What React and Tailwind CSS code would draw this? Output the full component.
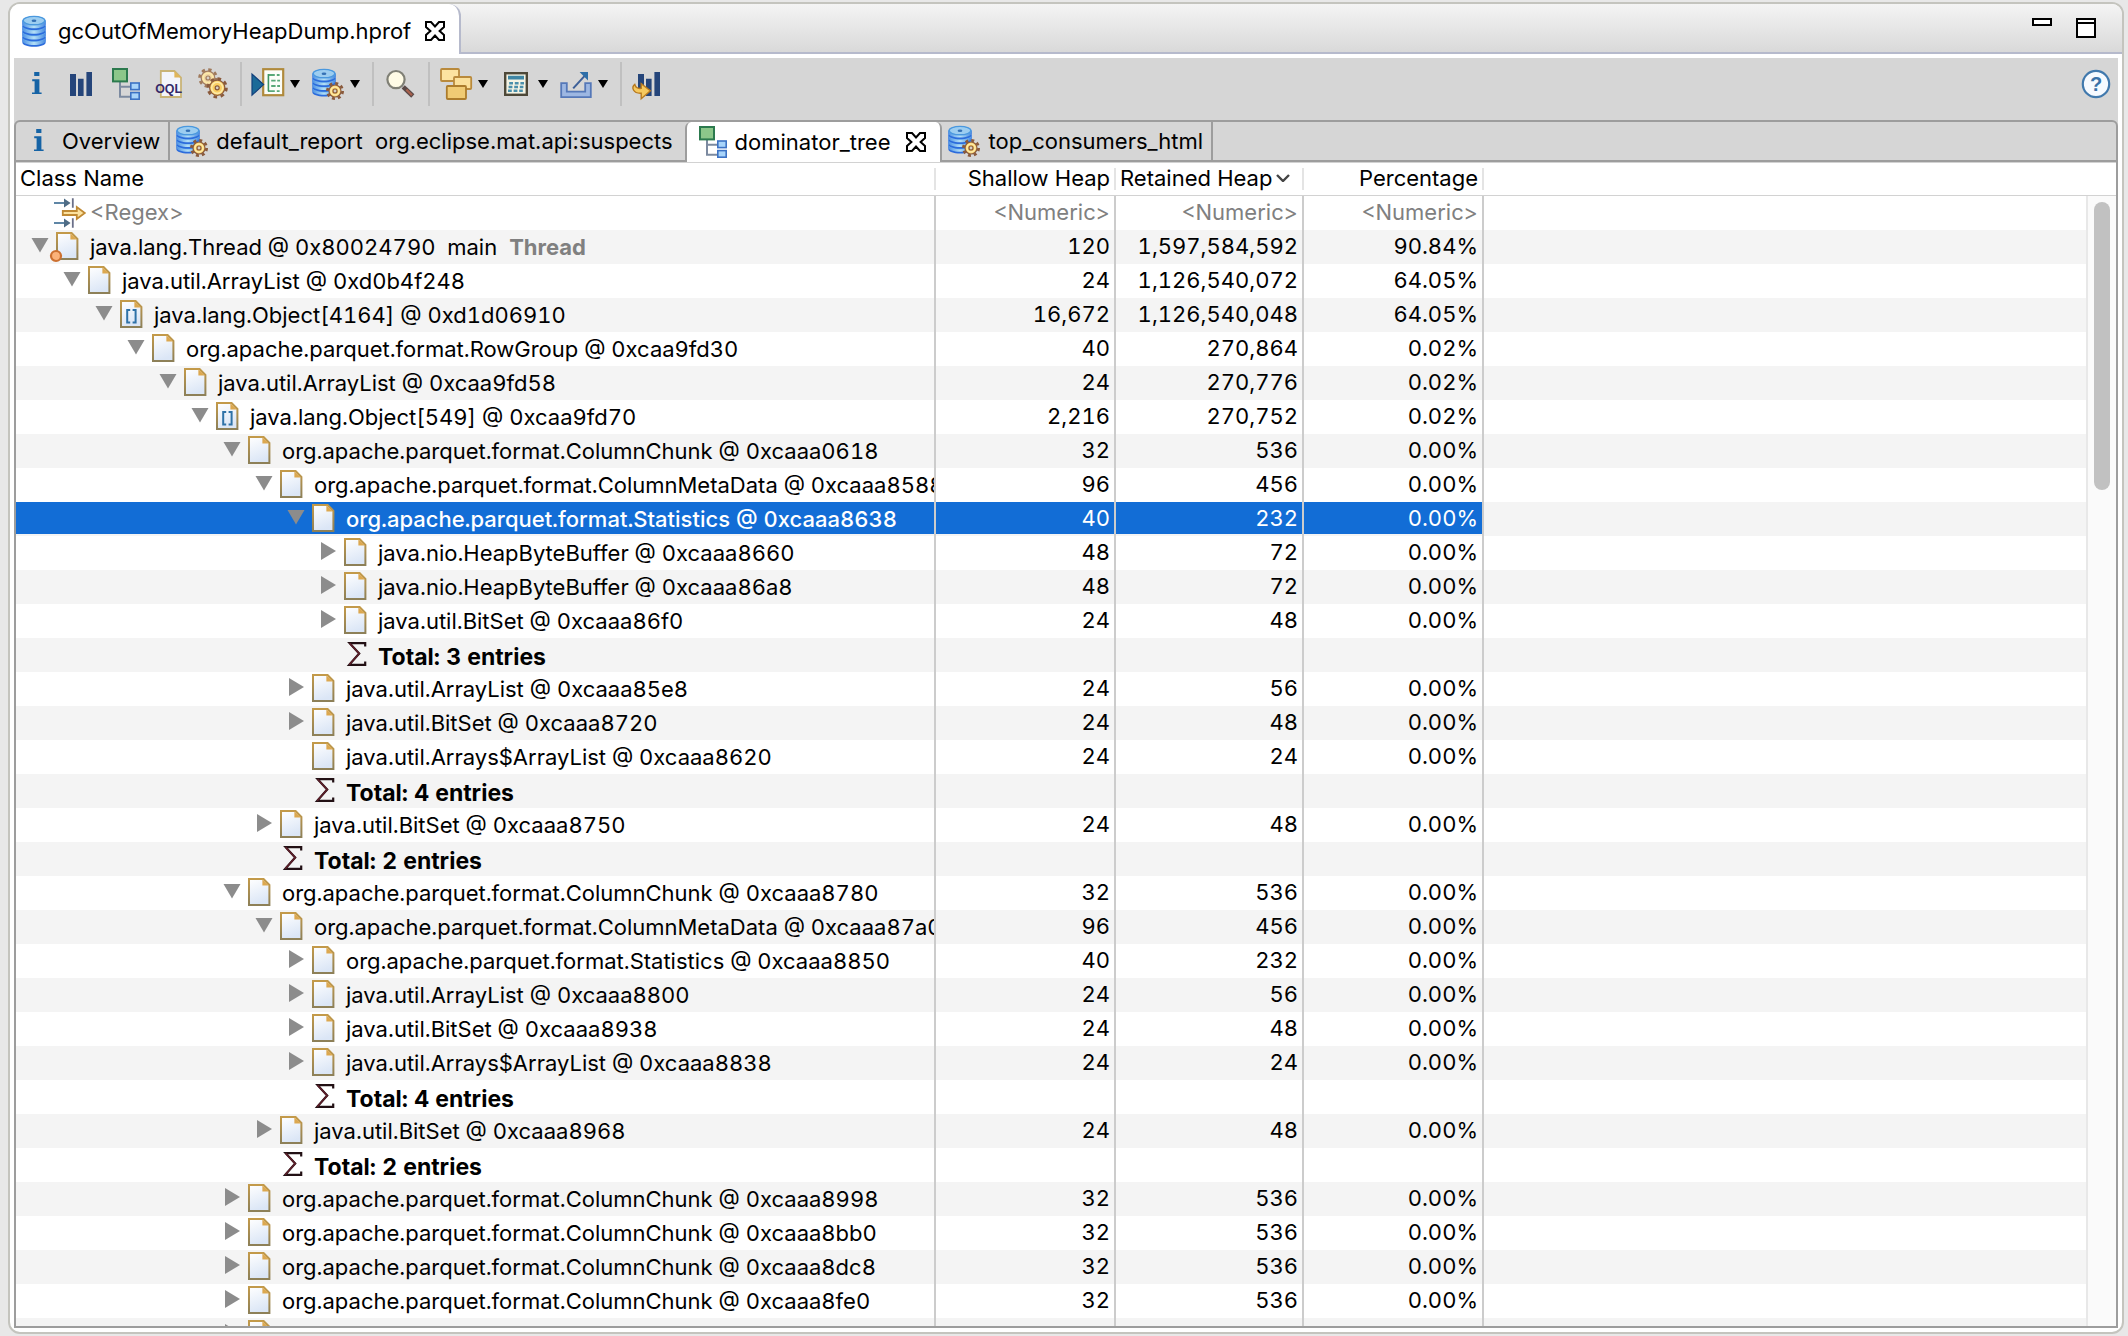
import React from "react";

function Icon({ children, className = "" }) {
  return (
    <svg viewBox="0 0 16 16" aria-hidden="true" className={"block size-8 shrink-0 overflow-visible " + className}>
      {children}
    </svg>
  );
}

function Gear({ cx, cy, r, faded }) {
  const c = faded ? "#a07a5c" : "#8a5a3c";
  const tooth = (r * Math.PI) / 8;
  return (
    <g>
      <circle cx={cx} cy={cy} r={r} fill="none" stroke={c} strokeWidth="1.4" strokeDasharray={`${tooth} ${tooth}`} />
      <circle cx={cx} cy={cy} r={r - 0.8} fill={faded ? "#f0d6a4" : "#fbcf62"} stroke={c} strokeWidth="0.6" />
      <circle cx={cx} cy={cy} r={r - 1.8} fill="none" stroke="#fdeaa8" strokeWidth="0.8" />
      <circle cx={cx} cy={cy} r="1" fill="#d8d0c4" stroke={c} strokeWidth="0.6" />
    </g>
  );
}

function Discs({ step, bottom }) {
  const levels = [3, 2, 1, 0].map((n) => 2.8 + n * step);
  return (
    <g>
      {levels.map((y) => (
        <g key={y}>
          <path d={`M2.2 ${y}v${bottom}c0 1.1 2.6 2 5.8 2s5.8-.9 5.8-2v-${bottom}z`} fill="#2c6cdc" />
          <path d={`M2.2 ${y}v${bottom - 0.9}c0 1.1 2.6 2 5.8 2s5.8-.9 5.8-2V${y}z`} fill="url(#disc)" />
          <ellipse cx="8" cy={y} rx="5.8" ry="2.2" fill="#6cb2ec" />
        </g>
      ))}
      <ellipse cx="8" cy="2.8" rx="5.4" ry="2.1" fill="#9ccdf0" stroke="#4a98de" strokeWidth="0.7" />
      <ellipse cx="8" cy="2.9" rx="1.2" ry="0.6" fill="#3470b4" />
    </g>
  );
}

const DatabaseIcon = () => (
  <Icon>
    <Discs step={2.8} bottom={2.7} />
  </Icon>
);

const DatabaseGearIcon = () => (
  <Icon>
    <g transform="translate(-2 0)">
      <Discs step={2.4} bottom={2.3} />
    </g>
    <Gear cx={11.5} cy={11.5} r={3.8} />
  </Icon>
);

const InfoIcon = () => (
  <Icon>
    <path d="M7.1 2h2.6v2H7.1zM6.1 5.6h3.6v6.6h1.1V13H6v-.8h1.3V6.6H6.1z" fill="#1563a5" />
  </Icon>
);

const BarsIcon = () => (
  <Icon>
    <path d="M3 3h3v11H3zM7 5.4h2.8V14H7zM11.2 2H14v12h-2.8z" fill="#25457a" />
  </Icon>
);

const TreeIcon = () => (
  <Icon>
    <path d="M6 7v7.4h5.5M6 9.4h5.5" fill="none" stroke="#7c8aa0" />
    <rect x="2.5" y="0.5" width="7" height="6.2" fill="#8cc78a" stroke="#2c7a4e" />
    <rect x="11.4" y="7.5" width="4.2" height="3.3" fill="#a8d4fa" stroke="#3c72c4" strokeWidth="0.8" />
    <rect x="11.4" y="12.3" width="4.2" height="3.3" fill="#a8d4fa" stroke="#3c72c4" strokeWidth="0.8" />
  </Icon>
);

const OqlIcon = () => (
  <Icon>
    <path d="M4.4 1.5h6.8l3.3 3.3v9.7H4.4z" fill="#f3f5fb" stroke="#c9b477" strokeWidth="0.9" />
    <path d="M11.2 1.5v3.3h3.3z" fill="#e0b65c" />
    <text x="1.6" y="12.3" fontSize="6.2" fontWeight="bold" fontFamily="Liberation Sans, sans-serif" fill="#352a68">OQL</text>
  </Icon>
);

const GearsIcon = () => (
  <Icon>
    <Gear cx={6} cy={5} r={4.2} faded />
    <Gear cx={10.6} cy={9.9} r={4.6} />
  </Icon>
);

const QueryIcon = () => (
  <Icon>
    <rect x="5.6" y="0.6" width="10" height="13" fill="#fbfdf8" stroke="#b08a3c" strokeWidth="1.1" />
    <path d="M8 3.5h3.4M12.4 3.5h1.4M9.6 6.3h2.2M12.6 6.3h1.4M9.6 9h2.2M12.6 9h1.4M8 11.6h3.4M12.4 11.6h1.4" stroke="#58a878" strokeWidth="0.9" />
    <path d="M8.2 3v8.6" stroke="#3f9464" strokeWidth="0.8" />
    <path d="M0 3v10.6l5.8-5.3z" fill="#1b6a98" stroke="#12407c" strokeWidth="0.6" />
  </Icon>
);

const SearchIcon = () => (
  <Icon>
    <path d="M9.6 9.4l4.8 4.6" stroke="#5a4a48" strokeWidth="2.3" />
    <path d="M11.2 10.8l2.8 2.8" stroke="#a8604c" strokeWidth="1.1" />
    <circle cx="6" cy="5.8" r="4.3" fill="#fffbe6" stroke="#808076" strokeWidth="1.1" />
  </Icon>
);

const GroupIcon = () => (
  <Icon>
    <rect x="0.5" y="0.5" width="9" height="6" rx="0.5" fill="#fce3a0" stroke="#b98a3c" strokeWidth="0.9" />
    <rect x="7" y="4.5" width="8.6" height="6" rx="0.5" fill="#fbe09a" stroke="#b98a3c" strokeWidth="0.9" />
    <rect x="3.4" y="9" width="9.6" height="6.5" rx="0.5" fill="#f0cb74" stroke="#ac7c2c" strokeWidth="0.9" />
  </Icon>
);

const CalculatorIcon = () => (
  <Icon>
    <rect x="2.6" y="2.6" width="10.8" height="10.8" fill="#f4f4e4" stroke="#4d4838" strokeWidth="1.2" />
    <path d="M4 4.8h8" stroke="#3f86a4" strokeWidth="1.8" />
    <path d="M4.6 7.6h7.4M4.3 9.5h7.4M4 11.4h7.4" stroke="#4a90ac" strokeWidth="1.3" strokeDasharray="1.9 0.9" />
  </Icon>
);

const ExportIcon = () => (
  <Icon>
    <path d="M.6 7.6h2.8v4.2h9.2V7.6h2.8v7H.6z" fill="#9db7e2" stroke="#5578b8" strokeWidth="0.9" />
    <path d="M6.6 10.2l6.4-7" stroke="#3c5f98" strokeWidth="1" />
    <path d="M9.8 2h4.2v4.2z" fill="#2d6ea8" />
  </Icon>
);

const CompareIcon = () => (
  <Icon>
    <path d="M3 3h3v9H3zM7 5.4h2.8V14H7zM11.2 2H14v12h-2.8z" fill="#25457a" />
    <path d="M1.4 8.2C-.4 9.6.4 12.8 4.6 12.6v2.8l4.6-4-4.6-3.6v2.4C3 10.4 1.8 9.8 1.4 8.2z" fill="#f6c95e" stroke="#b87a1e" strokeWidth="0.7" />
  </Icon>
);

const RegexIcon = () => (
  <Icon>
    <path d="M0 3h6M0 13h6" stroke="#5f86a6" strokeWidth="1" />
    <path d="M5 .8L8.3 3 5 5.2zM5 10.8L8.3 13 5 15.2z" fill="#4f6c86" />
    <path d="M9.4.6v4.8M9.4 10.6v4.8" stroke="#6a6f88" strokeWidth="0.9" />
    <path d="M4.4 7h7V5l4 3-4 3V9h-7z" fill="#fbe2a0" stroke="#c08a34" strokeWidth="0.9" />
  </Icon>
);

const HelpIcon = () => (
  <Icon>
    <circle cx="8" cy="8" r="6.6" fill="#f6faff" stroke="#4179ad" strokeWidth="1.1" />
    <text x="8" y="11.6" textAnchor="middle" fontSize="10" fontWeight="bold" fontFamily="Liberation Sans, sans-serif" fill="#3a72a8">?</text>
  </Icon>
);

function ObjectIcon({ kind }) {
  if (kind === "sum")
    return (
      <Icon>
        <path d="M12.6 4.2V2.6H4.8l4.8 5.2-5 5.6h8v-1.6" fill="none" stroke="#221014" strokeWidth="1.1" />
        <path d="M4.8 2.6l4.8 5.2-5 5.6" fill="none" stroke="#5e1f2a" strokeWidth="0.8" />
      </Icon>
    );
  return (
    <Icon>
      <path d="M2.5 1.5h7.3l2.9 2.9v10.1H2.5z" fill="url(#page)" stroke="url(#pageEdge)" />
      <path d="M9.2 1.6v3.2h3.4z" fill="#dca850" />
      {kind === "array" && <path d="M7.1 6H5.6v6.2h1.5M8.3 6h1.5v6.2H8.3" fill="none" stroke="#2f72a8" />}
      {kind === "thread" && <circle cx="2" cy="13" r="2.5" fill="#fbb27a" stroke="#cc7030" strokeWidth="1.1" />}
    </Icon>
  );
}

const CloseIcon = () => (
  <svg viewBox="0 0 10 10" className="block size-5">
    <path d="M.5.5H3l2 2.2L7 .5h2.5V3L7.3 5l2.2 2v2.5H7L5 7.3 3 9.5H.5V7l2.2-2L.5 3z" fill="#fff" stroke="#000" />
  </svg>
);

const tools = [
  { label: "Overview", icon: InfoIcon },
  { label: "Histogram", icon: BarsIcon },
  { label: "Dominator tree", icon: TreeIcon },
  { label: "OQL", icon: OqlIcon },
  { label: "Thread overview", icon: GearsIcon },
  null,
  { label: "Run expert system test", icon: QueryIcon, menu: true },
  { label: "Query browser", icon: DatabaseGearIcon, menu: true },
  null,
  { label: "Find object", icon: SearchIcon },
  null,
  { label: "Group result", icon: GroupIcon, menu: true },
  { label: "Calculate retained size", icon: CalculatorIcon, menu: true },
  { label: "Export", icon: ExportIcon, menu: true },
  null,
  { label: "Compare", icon: CompareIcon },
];

const CHUNK = "org.apache.parquet.format.ColumnChunk @ ";
const META = "org.apache.parquet.format.ColumnMetaData @ ";
const STATS = "org.apache.parquet.format.Statistics @ ";

// level, state (open / closed / leaf), name, shallow heap, retained heap, percentage, icon kind
const rows = [
  [0, "open", "java.lang.Thread @ 0x80024790  main", "120", "1,597,584,592", "90.84%", "thread"],
  [1, "open", "java.util.ArrayList @ 0xd0b4f248", "24", "1,126,540,072", "64.05%"],
  [2, "open", "java.lang.Object[4164] @ 0xd1d06910", "16,672", "1,126,540,048", "64.05%", "array"],
  [3, "open", "org.apache.parquet.format.RowGroup @ 0xcaa9fd30", "40", "270,864", "0.02%"],
  [4, "open", "java.util.ArrayList @ 0xcaa9fd58", "24", "270,776", "0.02%"],
  [5, "open", "java.lang.Object[549] @ 0xcaa9fd70", "2,216", "270,752", "0.02%", "array"],
  [6, "open", CHUNK + "0xcaaa0618", "32", "536", "0.00%"],
  [7, "open", META + "0xcaaa8588", "96", "456", "0.00%"],
  [8, "open", STATS + "0xcaaa8638", "40", "232", "0.00%", "selected"],
  [9, "closed", "java.nio.HeapByteBuffer @ 0xcaaa8660", "48", "72", "0.00%"],
  [9, "closed", "java.nio.HeapByteBuffer @ 0xcaaa86a8", "48", "72", "0.00%"],
  [9, "closed", "java.util.BitSet @ 0xcaaa86f0", "24", "48", "0.00%"],
  [9, "leaf", "Total: 3 entries", "", "", "", "sum"],
  [8, "closed", "java.util.ArrayList @ 0xcaaa85e8", "24", "56", "0.00%"],
  [8, "closed", "java.util.BitSet @ 0xcaaa8720", "24", "48", "0.00%"],
  [8, "leaf", "java.util.Arrays$ArrayList @ 0xcaaa8620", "24", "24", "0.00%"],
  [8, "leaf", "Total: 4 entries", "", "", "", "sum"],
  [7, "closed", "java.util.BitSet @ 0xcaaa8750", "24", "48", "0.00%"],
  [7, "leaf", "Total: 2 entries", "", "", "", "sum"],
  [6, "open", CHUNK + "0xcaaa8780", "32", "536", "0.00%"],
  [7, "open", META + "0xcaaa87a0", "96", "456", "0.00%"],
  [8, "closed", STATS + "0xcaaa8850", "40", "232", "0.00%"],
  [8, "closed", "java.util.ArrayList @ 0xcaaa8800", "24", "56", "0.00%"],
  [8, "closed", "java.util.BitSet @ 0xcaaa8938", "24", "48", "0.00%"],
  [8, "closed", "java.util.Arrays$ArrayList @ 0xcaaa8838", "24", "24", "0.00%"],
  [8, "leaf", "Total: 4 entries", "", "", "", "sum"],
  [7, "closed", "java.util.BitSet @ 0xcaaa8968", "24", "48", "0.00%"],
  [7, "leaf", "Total: 2 entries", "", "", "", "sum"],
  [6, "closed", CHUNK + "0xcaaa8998", "32", "536", "0.00%"],
  [6, "closed", CHUNK + "0xcaaa8bb0", "32", "536", "0.00%"],
  [6, "closed", CHUNK + "0xcaaa8dc8", "32", "536", "0.00%"],
  [6, "closed", CHUNK + "0xcaaa8fe0", "32", "536", "0.00%"],
  [6, "closed", "", "32", "536", "0.00%"],
];

function Twisty({ state }) {
  if (state === "leaf") return <span className="w-[18px] shrink-0" />;
  return (
    <button type="button" aria-label={state === "open" ? "Collapse" : "Expand"} className="w-[18px] shrink-0">
      <svg viewBox="0 0 18 34" className="block h-[34px] w-[18px]">
        <path d={state === "open" ? "M.5 8h17L9 22.5z" : "M2 6v18l15-9z"} fill="#8c8c8c" />
      </svg>
    </button>
  );
}

function HeaderCell({ children, align = "justify-end" }) {
  return (
    <th scope="col" className="border-b border-[#d2d2d2] p-0 font-normal">
      <div className={"my-[5px] flex h-[22px] items-center gap-1 border-r-2 border-[#e4e4e4] pr-1 pb-0.5 pl-1 " + align}>{children}</div>
    </th>
  );
}

function NumberCell({ children, selected, muted }) {
  return (
    <td className="border-r-2 border-[#cccccc] p-0 text-right">
      <div
        className={
          "pr-1 pb-0.5 tabular-nums " +
          (selected ? "mb-0.5 h-8 bg-[#126dd6] leading-8 text-white" : muted ? "h-[34px] leading-8 text-[#808080]" : "h-[34px] leading-8")
        }
      >
        {children}
      </div>
    </td>
  );
}

function TreeRow({ row, striped }) {
  const [level, state, name, shallow, retained, percent, kind] = row;
  const selected = kind === "selected";
  const sum = kind === "sum";
  return (
    <tr aria-level={level + 1} aria-selected={selected} className={striped ? "bg-[#f4f4f4]" : "bg-white"}>
      <td className="border-r-2 border-[#cccccc] p-0">
        <div
          className={"flex items-start overflow-hidden whitespace-pre " + (selected ? "mb-0.5 h-8 bg-[#126dd6] text-white" : "h-[34px]")}
          style={{ paddingLeft: 15 + level * 32 }}
        >
          <Twisty state={state} />
          <span className="ml-[3px]"><ObjectIcon kind={kind} /></span>
          <span className={"ml-1.5 tabular-nums " + (sum ? "pt-0.5 text-[23px] font-bold" : selected ? "font-medium" : "")}>{name}</span>
          {kind === "thread" && <span className="ml-3 font-bold text-[#808080]">Thread</span>}
        </div>
      </td>
      <NumberCell selected={selected}>{shallow}</NumberCell>
      <NumberCell selected={selected}>{retained}</NumberCell>
      <NumberCell selected={selected}>{percent}</NumberCell>
      <td className="p-0" />
    </tr>
  );
}

function Tab({ icon: TabIcon, label, active, closable, before }) {
  return (
    <div
      role="tab"
      aria-selected={!!active}
      className={
        active
          ? "flex items-center rounded-t-[6px] border-x-2 border-[#9d9d9d] bg-white pr-3.5 pl-2"
          : "flex items-center border-b-2 border-[#9d9d9d] pl-1.5 " + (before ? "pr-3" : "border-r-2 pr-2")
      }
    >
      <button type="button" className="flex items-center gap-2 whitespace-pre">
        <TabIcon />
        {label}
      </button>
      {closable && <button type="button" aria-label="Close tab" className="ml-4"><CloseIcon /></button>}
    </div>
  );
}

export default function App() {
  return (
    <div className="h-screen overflow-hidden bg-[#e8e8e8] py-0.5 pr-1 pl-2 font-['Inter',sans-serif] text-[22px] leading-[34px] text-black">
      <svg className="absolute size-0" aria-hidden="true">
        <defs>
          <linearGradient id="page" x1="0" y1="0" x2="0.3" y2="1">
            <stop offset="0" stopColor="#ffffff" />
            <stop offset="1" stopColor="#dbe6f6" />
          </linearGradient>
          <linearGradient id="pageEdge" x1="0" y1="0" x2="0" y2="1">
            <stop offset="0" stopColor="#c39a4a" />
            <stop offset="1" stopColor="#8d8058" />
          </linearGradient>
          <linearGradient id="disc">
            <stop offset="0" stopColor="#4a8fe4" />
            <stop offset="0.5" stopColor="#b4e0f6" />
            <stop offset="1" stopColor="#4488e0" />
          </linearGradient>
        </defs>
      </svg>
      <div className="flex h-full flex-col overflow-hidden rounded-[12px] border-2 border-[#c4c4be] bg-white">
        <header className="flex h-[50px] shrink-0 bg-linear-to-b from-[#f4f4f4] to-[#d8d8d8]">
          <div className="flex items-center rounded-tr-[12px] border-r-2 border-[#b6bacc] bg-white pt-1 pr-3.5 pl-2">
            <DatabaseIcon />
            <span className="ml-2">gcOutOfMemoryHeapDump.hprof</span>
            <button type="button" aria-label="Close editor" className="ml-3.5"><CloseIcon /></button>
          </div>
          <div className="flex flex-1 items-start justify-end gap-6 border-b-2 border-[#b6bacc] pt-3.5 pr-[26px]">
            <button type="button" aria-label="Minimize" className="h-2 w-5 border-2 border-black bg-white" />
            <button type="button" aria-label="Maximize" className="flex h-5 w-5 flex-col justify-start border-2 border-black bg-white">
              <span className="mt-0.5 block h-0.5 w-full bg-black" />
            </button>
          </div>
        </header>
        <main className="mx-1 mt-1 mb-1 flex min-h-0 flex-1 flex-col bg-[#d6d6d6]">
          <div role="toolbar" className="flex h-[62px] shrink-0 items-start pt-1 pr-1.5 pl-1.5">
            <div className="flex items-center gap-3">
              {tools.map((tool, i) =>
                tool ? (
                  <button key={i} type="button" aria-label={tool.label} className="flex items-center gap-1.5">
                    <tool.icon />
                    {tool.menu && (
                      <svg viewBox="0 0 10 8" className="h-2 w-2.5"><path d="M0 0h10L5 8z" /></svg>
                    )}
                  </button>
                ) : (
                  <span key={i} className="-mr-0.5 h-11 w-0.5 bg-[#c0c0c0]" />
                )
              )}
            </div>
            <button type="button" aria-label="Help" className="mt-1.5 ml-auto"><HelpIcon /></button>
          </div>
          <section className="flex min-h-0 flex-1 flex-col overflow-hidden rounded-t-[6px] border-2 border-[#9d9d9d]">
            <div role="tablist" className="flex h-10 shrink-0">
              <Tab icon={InfoIcon} label="Overview" />
              <Tab icon={DatabaseGearIcon} label="default_report  org.eclipse.mat.api:suspects" before />
              <Tab icon={TreeIcon} label="dominator_tree" active closable />
              <Tab icon={DatabaseGearIcon} label="top_consumers_html" />
              <div className="flex-1 border-b-2 border-[#9d9d9d]" />
            </div>
            <div className="relative min-h-0 flex-1 overflow-hidden border-t border-[#d2d2d2] bg-white">
              <table role="treegrid" className="w-full table-fixed border-separate border-spacing-0">
                <colgroup>
                  <col className="w-[920px]" />
                  <col className="w-[180px]" />
                  <col className="w-[188px]" />
                  <col className="w-[180px]" />
                  <col />
                </colgroup>
                <thead>
                  <tr>
                    <HeaderCell align="justify-start">Class Name</HeaderCell>
                    <HeaderCell>Shallow Heap</HeaderCell>
                    <HeaderCell align="justify-start">
                      <span className="whitespace-nowrap">Retained Heap</span>
                      <svg viewBox="0 0 14 8" className="h-2 w-3.5 shrink-0"><path d="M1 1l6 6 6-6" fill="none" stroke="#444" strokeWidth="2.4" /></svg>
                    </HeaderCell>
                    <HeaderCell>Percentage</HeaderCell>
                    <th className="border-b border-[#d2d2d2] p-0" />
                  </tr>
                </thead>
                <tbody>
                  <tr className="text-[#808080]">
                    <td className="border-r-2 border-[#cccccc] p-0">
                      <div className="flex h-[34px] items-center gap-1 pl-[38px] leading-8">
                        <RegexIcon />
                        <span className="pb-0.5">&lt;Regex&gt;</span>
                      </div>
                    </td>
                    <NumberCell muted>&lt;Numeric&gt;</NumberCell>
                    <NumberCell muted>&lt;Numeric&gt;</NumberCell>
                    <NumberCell muted>&lt;Numeric&gt;</NumberCell>
                    <td className="p-0" />
                  </tr>
                  {rows.map((row, i) => (
                    <TreeRow key={i} row={row} striped={i % 2 === 0} />
                  ))}
                </tbody>
              </table>
              <div className="absolute top-[33px] right-0 bottom-0 w-[30px] border-l-2 border-[#e8e8e8] bg-[#fafafa] pt-1.5 pl-1.5">
                <div className="h-[288px] w-4 rounded-full bg-[#c1c1c1]" />
              </div>
            </div>
          </section>
        </main>
      </div>
    </div>
  );
}
